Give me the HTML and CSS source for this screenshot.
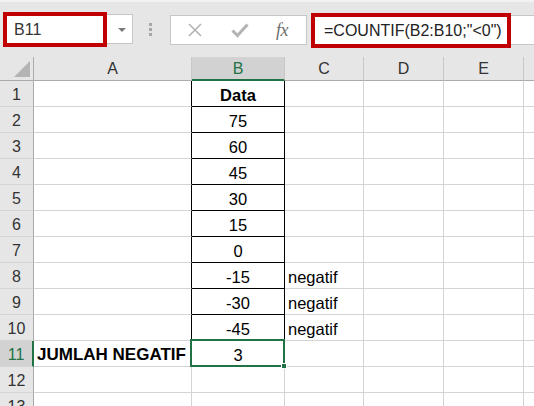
FILE: index.html
```html
<!DOCTYPE html>
<html>
<head>
<meta charset="utf-8">
<link rel="stylesheet" href="styles.css">
</head>
<body>
<div class="toolbar">
  <div class="namebox">
    <span class="name-text">B11</span>
    <span class="dd"></span>
    <div class="mark mark-name"></div>
  </div>
  <div class="dots"><i></i><i></i><i></i></div>
  <div class="btns">
    <svg class="ic-x" width="16" height="16" viewBox="0 0 16 16"><path d="M2 2 L14 14 M14 2 L2 14" stroke="#b3b3b3" stroke-width="1.6" fill="none"/></svg>
    <svg class="ic-ok" width="18" height="16" viewBox="0 0 18 16"><path d="M1.5 8.5 L6.5 13.5 L16.5 2.5" stroke="#b3b3b3" stroke-width="3" fill="none"/></svg>
    <span class="fx">fx</span>
  </div>
  <div class="formula">
    <span class="f-text">=COUNTIF(B2:B10;"&lt;0")</span>
    <div class="mark mark-formula"></div>
  </div>
</div>
<div class="sheet">
  <div class="corner"><span class="tri"></span></div>
  <div class="ch">A</div>
  <div class="ch ch-sel">B</div>
  <div class="ch">C</div>
  <div class="ch">D</div>
  <div class="ch">E</div>
  <div class="ch ch-last"></div>

  <div class="rh">1</div><div class="c tb-l"></div><div class="c tb bold">Data</div><div class="c"></div><div class="c"></div><div class="c"></div><div class="c last"></div>
  <div class="rh">2</div><div class="c tb-l"></div><div class="c tb">75</div><div class="c"></div><div class="c"></div><div class="c"></div><div class="c last"></div>
  <div class="rh">3</div><div class="c tb-l"></div><div class="c tb">60</div><div class="c"></div><div class="c"></div><div class="c"></div><div class="c last"></div>
  <div class="rh">4</div><div class="c tb-l"></div><div class="c tb">45</div><div class="c"></div><div class="c"></div><div class="c"></div><div class="c last"></div>
  <div class="rh">5</div><div class="c tb-l"></div><div class="c tb">30</div><div class="c"></div><div class="c"></div><div class="c"></div><div class="c last"></div>
  <div class="rh">6</div><div class="c tb-l"></div><div class="c tb">15</div><div class="c"></div><div class="c"></div><div class="c"></div><div class="c last"></div>
  <div class="rh">7</div><div class="c tb-l"></div><div class="c tb">0</div><div class="c"></div><div class="c"></div><div class="c"></div><div class="c last"></div>
  <div class="rh">8</div><div class="c tb-l"></div><div class="c tb">-15</div><div class="c left">negatif</div><div class="c"></div><div class="c"></div><div class="c last"></div>
  <div class="rh">9</div><div class="c tb-l"></div><div class="c tb">-30</div><div class="c left">negatif</div><div class="c"></div><div class="c"></div><div class="c last"></div>
  <div class="rh">10</div><div class="c tb-l"></div><div class="c tb">-45</div><div class="c left">negatif</div><div class="c"></div><div class="c"></div><div class="c last"></div>
  <div class="rh rh-sel">11</div><div class="c left bold">JUMLAH NEGATIF</div><div class="c sel">3<span class="selbox"><span class="handle"></span></span></div><div class="c"></div><div class="c"></div><div class="c"></div><div class="c last"></div>
  <div class="rh">12</div><div class="c"></div><div class="c"></div><div class="c"></div><div class="c"></div><div class="c"></div><div class="c last"></div>
  <div class="rh">13</div><div class="c"></div><div class="c"></div><div class="c"></div><div class="c"></div><div class="c"></div><div class="c last"></div>
</div>
</body>
</html>
```

FILE: styles.css
```css
* { box-sizing: border-box; }
html, body { margin: 0; padding: 0; }
body {
  width: 534px;
  height: 406px;
  overflow: hidden;
  background: #ffffff;
  font-family: "Liberation Sans", Arial, sans-serif;
}

.toolbar {
  height: 57px;
  background: #e6e6e6;
  border-top: 2px solid #f2f2f2;
  display: flex;
  align-items: flex-start;
  position: relative;
}

.namebox {
  position: relative;
  margin-left: 3px;
  margin-top: 12px;
  width: 130px;
  height: 30px;
  background: #fff;
  border: 1px solid #c6c6c6;
  display: flex;
  align-items: center;
}
.name-text {
  font-size: 16px;
  color: #333;
  padding-left: 10px;
  padding-top: 1px;
}
.dd {
  position: absolute;
  left: 114px;
  top: 13px;
  width: 0; height: 0;
  border-left: 4px solid transparent;
  border-right: 4px solid transparent;
  border-top: 4px solid #7a7a7a;
}

.mark {
  position: absolute;
  border: 4px solid #c00000;
  pointer-events: none;
}
.mark-name { left: -1px; top: -3px; width: 104px; height: 35px; }
.mark-formula { left: -1px; top: -3px; width: 200px; height: 35px; }

.dots {
  margin-left: 16px;
  margin-top: 21px;
  display: flex;
  flex-direction: column;
  gap: 2px;
}
.dots i {
  display: block;
  width: 3px;
  height: 3px;
  background: #a6a6a6;
}

.btns {
  margin-left: 18px;
  margin-top: 13px;
  width: 137px;
  height: 30px;
  background: #fff;
  border: 1px solid #c6c6c6;
  display: flex;
  align-items: center;
}
.ic-x { margin-left: 16px; }
.ic-ok { margin-left: 28px; }
.fx {
  margin-left: 27px;
  font-family: "Liberation Serif", "Times New Roman", serif;
  font-style: italic;
  font-size: 18px;
  color: #6e6e6e;
  letter-spacing: -0.5px;
}

.formula {
  position: relative;
  margin-left: 5px;
  margin-top: 13px;
  flex: 1;
  height: 30px;
  background: #fff;
  border-top: 1px solid #c6c6c6;
  border-bottom: 1px solid #c6c6c6;
  display: flex;
  align-items: center;
}
.f-text {
  font-size: 16px;
  color: #222;
  padding-left: 12px;
  padding-top: 1px;
  white-space: nowrap;
}

.sheet {
  display: grid;
  grid-template-columns: 34px 158px 93px 79px 80px 80px 1fr;
  grid-auto-rows: 26px;
  grid-template-rows: 24px;
}

.corner {
  background: #e6e6e6;
  border-right: 1px solid #ababab;
  border-bottom: 1px solid #ababab;
  position: relative;
}
.tri {
  position: absolute;
  right: 3px;
  bottom: 3px;
  width: 0; height: 0;
  border-left: 16px solid transparent;
  border-bottom: 16px solid #b4b4b4;
}

.ch {
  background: #e6e6e6;
  border-right: 1px solid #c8c8c8;
  border-bottom: 1px solid #ababab;
  display: flex;
  justify-content: center;
  align-items: center;
  font-size: 16px;
  color: #333;
  padding-top: 1px;
}
.ch-sel {
  background: #d2d2d2;
  color: #217346;
  border-bottom: 2px solid #217346;
  padding-top: 2px;
}
.ch-last { border-right: none; }

.rh {
  background: #e6e6e6;
  border-right: 1px solid #ababab;
  border-bottom: 1px solid #d4d4d4;
  display: flex;
  justify-content: center;
  align-items: flex-end;
  padding-bottom: 2px;
  font-size: 16px;
  color: #333;
}
.rh-sel {
  background: #d2d2d2;
  color: #217346;
  border-right: 2px solid #217346;
}

.c {
  border-right: 1px solid #d4d4d4;
  border-bottom: 1px solid #d4d4d4;
  display: flex;
  justify-content: center;
  align-items: flex-end;
  padding-bottom: 1px;
  font-size: 16.5px;
  color: #000;
  white-space: nowrap;
}
.c.last { border-right: none; }
.c.left { justify-content: flex-start; padding-left: 3px; }
.c.bold { font-weight: bold; }
.c.left.bold { font-size: 17px; padding-left: 3px; }
.tb-l { border-right-color: #000; }
.tb { border-right-color: #000; border-bottom-color: #000; }

.sel { position: relative; }
.selbox {
  position: absolute;
  left: -2px;
  top: -2px;
  right: -1px;
  bottom: -1px;
  border: 2px solid #217346;
}
.handle {
  position: absolute;
  right: -4px;
  bottom: -4px;
  width: 6px;
  height: 6px;
  background: #217346;
  border: 1px solid #fff;
}
```
